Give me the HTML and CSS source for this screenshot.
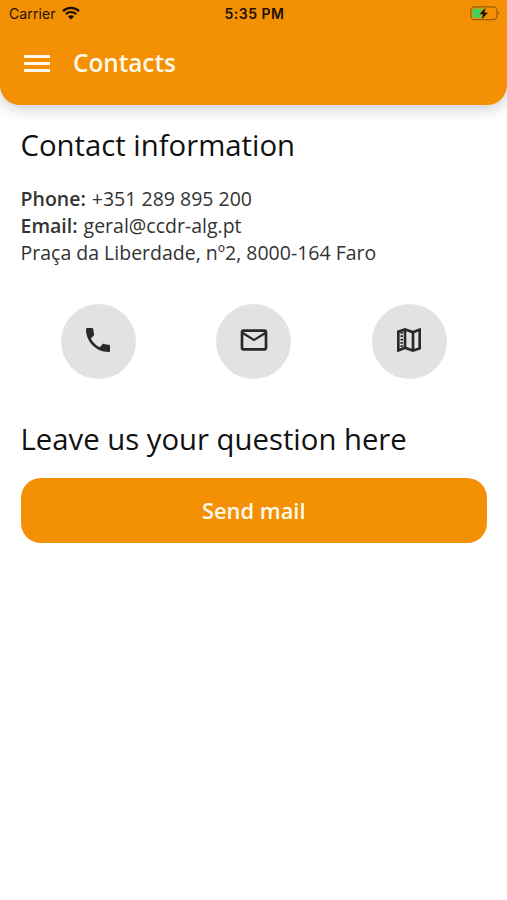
FILE: index.html
```html
<!DOCTYPE html>
<html lang="en">
<head>
    <meta charset="UTF-8">
    <meta name="viewport" content="width=device-width, initial-scale=1.0">
    <title>Contacts</title>
    <link rel="stylesheet" href="styles.css">
</head>
<body>
    <header class="header">
        <div class="status-bar">
            <div class="carrier">
                <span>Carrier</span>
                <svg class="wifi" viewBox="0 0 18 14">
                    <path d="M1 5.2 A11.3 11.3 0 0 1 17 5.2" fill="none" stroke="#1c1000" stroke-width="2.4"/>
                    <path d="M3.9 8.1 A7.2 7.2 0 0 1 14.1 8.1" fill="none" stroke="#1c1000" stroke-width="2.2"/>
                    <path d="M9 13.6 L6 10.6 A4.3 4.3 0 0 1 12 10.6 Z" fill="#1c1000"/>
                </svg>
            </div>
            <span class="time">5:35 PM</span>
            <svg class="battery" viewBox="0 0 30 16">
                <rect x="0.8" y="0.9" width="26" height="12.8" rx="3.6" fill="none" stroke="#9a5d08" stroke-width="1.2"/>
                <path d="M28.2 5.3 Q30.4 7.3 28.2 9.3 Z" fill="#9a5d08"/>
                <path d="M4.2 2.8 H13.5 L9 8.1 H12 L11 11.8 H4.2 Q2.7 11.8 2.7 10.3 V4.3 Q2.7 2.8 4.2 2.8 Z" fill="#3fd45c"/>
                <path d="M15.8 1.2 L9.2 8.3 H12.8 L11.4 13.8 L18.2 6.4 H14.6 Z" fill="#140b00" stroke="#f39003" stroke-width="0.4"/>
            </svg>
        </div>
        <div class="toolbar">
            <button class="menu" aria-label="Menu">
                <span></span>
                <span></span>
                <span></span>
            </button>
            <h1>Contacts</h1>
        </div>
    </header>

    <main class="content">
        <h2>Contact information</h2>
        <div class="info">
            <p><b>Phone:</b> +351 289 895 200</p>
            <p><b>Email:</b> geral@ccdr-alg.pt</p>
            <p>Praça da Liberdade, nº2, 8000-164 Faro</p>
        </div>

        <div class="actions">
            <button class="round" aria-label="Phone">
                <svg viewBox="0 0 24 24">
                    <path d="M6.62 10.79c1.44 2.83 3.76 5.14 6.59 6.59l2.2-2.2c.27-.27.67-.36 1.02-.24 1.12.37 2.33.57 3.57.57.55 0 1 .45 1 1V20c0 .55-.45 1-1 1-9.39 0-17-7.61-17-17 0-.55.45-1 1-1h3.5c.55 0 1 .45 1 1 0 1.25.2 2.45.57 3.57.11.35.03.74-.25 1.02l-2.2 2.2z"/>
                </svg>
            </button>
            <button class="round" aria-label="Email">
                <svg viewBox="0 0 24 24">
                    <path d="M22 6c0-1.1-.9-2-2-2H4c-1.1 0-2 .9-2 2v12c0 1.1.9 2 2 2h16c1.1 0 2-.9 2-2V6zm-2 0l-8 5-8-5h16zm0 12H4V8l8 5 8-5v10z"/>
                </svg>
            </button>
            <button class="round" aria-label="Map">
                <svg viewBox="0 0 24 24">
                    <path d="M20.5 3l-.16.03L15 5.1 9 3 3.36 4.9c-.21.07-.36.25-.36.48V20.5c0 .28.22.5.5.5l.16-.03L9 18.9l6 2.1 5.64-1.9c.21-.07.36-.25.36-.48V3.5c0-.28-.22-.5-.5-.5zM5 6.46l3-1.01v11.7l-3 1.16V6.46zm9 12.08l-4-1.4V5.46l4 1.4v11.68zm5-1l-3 1.01V6.86l3-1.16v11.84z"/>
                    <path d="M6.5 6v11.5" fill="none" stroke="#292929" stroke-width="1.9" stroke-dasharray="1.3 1.2"/>
                </svg>
            </button>
        </div>

        <h2>Leave us your question here</h2>
        <button class="send">Send mail</button>
    </main>
</body>
</html>
```

FILE: styles.css
```css
* {
    box-sizing: border-box;
}
body {
    margin: 0;
    font-family: "Open Sans", sans-serif;
    background: #fff;
    color: #333;
}
h1, h2, p {
    margin: 0;
}
button {
    border: none;
    padding: 0;
    font-family: inherit;
    cursor: pointer;
}
.header {
    height: 105px;
    background: #f39003;
    border-radius: 0 0 20px 20px;
    box-shadow: 0 3px 16px rgba(0, 0, 0, 0.22);
}
.status-bar {
    display: grid;
    grid-template-columns: 1fr auto 1fr;
    align-items: center;
    height: 27px;
    padding: 0 7px 0 9px;
    font-family: Inter, sans-serif;
    font-size: 14px;
    color: #1c1000;
}
.carrier {
    display: flex;
    align-items: center;
    gap: 6px;
    letter-spacing: 0.1px;
}
.wifi {
    width: 18px;
    height: 14px;
    margin-bottom: 2px;
}
.time {
    font-weight: 600;
    letter-spacing: 0.5px;
}
.battery {
    justify-self: end;
    width: 30px;
    height: 16px;
}
.toolbar {
    display: flex;
    align-items: center;
    gap: 23px;
    height: 73px;
    padding-left: 24px;
}
.menu {
    display: flex;
    flex-direction: column;
    gap: 4px;
    width: 26px;
    background: none;
}
.menu span {
    height: 3px;
    background: #fff8e8;
}
h1 {
    padding-bottom: 3px;
    font-size: 24.3px;
    font-weight: 600;
    color: #fff8e8;
}
.content {
    padding: 20px 20px 0 20.5px;
}
h2 {
    font-size: 29.3px;
    font-weight: 400;
    line-height: 40px;
    color: #111;
}
.info {
    margin-top: 20px;
    font-size: 19.5px;
    line-height: 27px;
}
.info b {
    margin-right: 1px;
    font-weight: 600;
}
.actions {
    display: flex;
    justify-content: space-around;
    margin: 38px 0 40px;
}
.round {
    display: flex;
    align-items: center;
    justify-content: center;
    width: 75px;
    height: 75px;
    padding-bottom: 3px;
    border-radius: 50%;
    background: #e2e2e2;
}
.round svg {
    width: 32px;
    height: 32px;
    fill: #292929;
}
.send {
    width: 100%;
    height: 65px;
    margin-top: 19px;
    padding-bottom: 1px;
    border-radius: 20px;
    background: #f39003;
    color: #fff8e8;
    font-size: 21.9px;
    font-weight: 600;
}
```
